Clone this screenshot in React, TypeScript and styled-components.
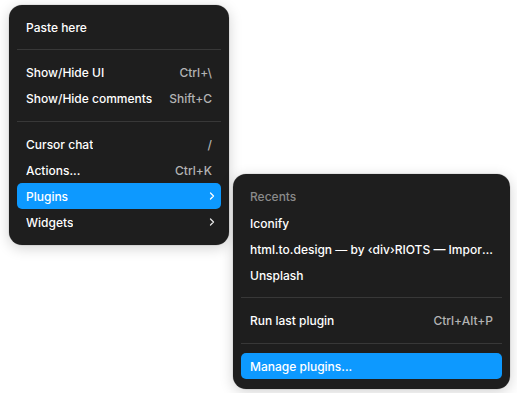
import React from "react";
import styled, { createGlobalStyle } from "styled-components";

const GlobalStyle = createGlobalStyle`
  html, body {
    margin: 0;
    padding: 0;
    background: #ffffff;
  }
  body {
    font-family: Inter, "Noto Sans", sans-serif;
    -webkit-font-smoothing: antialiased;
  }
`;

const Canvas = styled.div`
  padding: 5px 0 0 9px;
  width: 517px;
  height: 393px;
  box-sizing: border-box;
`;

const Menu = styled.div<{ $width: number }>`
  position: relative;
  width: ${(p) => p.$width}px;
  box-sizing: border-box;
  padding: 9px 8px 10px;
  background: #1e1e1e;
  border-radius: 13px;
  box-shadow: 0 0 0 0.5px rgba(0, 0, 0, 0.12), 0 3px 14px rgba(0, 0, 0, 0.18);
  display: flex;
  flex-direction: column;
`;

// the submenu opens to the right of its parent item, 4px past the menu edge
const SubMenuAnchor = styled.div`
  position: absolute;
  left: calc(100% + 12px);
  top: -9px;
`;

const Item = styled.div<{ $active?: boolean; $muted?: boolean }>`
  height: ${(p) => (p.$muted ? 27 : 26)}px;
  padding: 0 9px;
  border-radius: 5px;
  display: flex;
  align-items: center;
  justify-content: space-between;
  gap: 12px;
  font-size: 12px;
  font-weight: 500;
  color: ${(p) => (p.$muted ? "#8a8a8a" : "#ffffff")};
  background: ${(p) => (p.$active ? "#0d99ff" : "transparent")};
  white-space: nowrap;
  position: relative;
`;

const Label = styled.span`
  overflow: hidden;
  text-overflow: ellipsis;
  min-width: 0;
`;

const Shortcut = styled.span<{ $active?: boolean }>`
  color: ${(p) => (p.$active ? "#ffffff" : "#b3b3b3")};
  font-weight: 500;
  flex-shrink: 0;
`;

const Separator = styled.div`
  height: 1px;
  margin: 9px 0 9.5px;
  background: #383838;
`;

const Chevron = ({ active }: { active?: boolean }) => (
  <svg width="6" height="8" viewBox="0 0 6 8" style={{ flexShrink: 0, marginRight: -3 }}>
    <path
      d="M1.5 1 L4.5 4 L1.5 7"
      fill="none"
      stroke={active ? "#ffffff" : "#e6e6e6"}
      strokeWidth="1.3"
      strokeLinecap="round"
      strokeLinejoin="round"
    />
  </svg>
);

export default function App() {
  return (
    <>
      <GlobalStyle />
      <Canvas>
        <Menu $width={220}>
          <Item>
            <Label>Paste here</Label>
          </Item>
          <Separator />
          <Item>
            <Label>Show/Hide UI</Label>
            <Shortcut>Ctrl+\</Shortcut>
          </Item>
          <Item>
            <Label>Show/Hide comments</Label>
            <Shortcut>Shift+C</Shortcut>
          </Item>
          <Separator />
          <Item>
            <Label>Cursor chat</Label>
            <Shortcut>/</Shortcut>
          </Item>
          <Item>
            <Label>Actions...</Label>
            <Shortcut>Ctrl+K</Shortcut>
          </Item>
          <Item $active>
            <Label>Plugins</Label>
            <Chevron active />
            <SubMenuAnchor>
              <Menu $width={277}>
                <Item $muted>
                  <Label>Recents</Label>
                </Item>
                <Item>
                  <Label>Iconify</Label>
                </Item>
                <Item>
                  <Label>
                    html.to.design — by ‹div›RIOTS — Import websites to Figma designs (web,html,css)
                  </Label>
                </Item>
                <Item>
                  <Label>Unsplash</Label>
                </Item>
                <Separator />
                <Item>
                  <Label>Run last plugin</Label>
                  <Shortcut>Ctrl+Alt+P</Shortcut>
                </Item>
                <Separator />
                <Item $active>
                  <Label>Manage plugins...</Label>
                </Item>
              </Menu>
            </SubMenuAnchor>
          </Item>
          <Item>
            <Label>Widgets</Label>
            <Chevron />
          </Item>
        </Menu>
      </Canvas>
    </>
  );
}
